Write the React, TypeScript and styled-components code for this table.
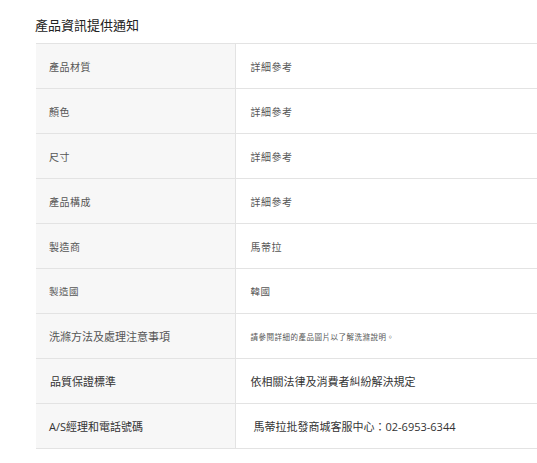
import React from 'react';
import styled, { createGlobalStyle } from 'styled-components';

const GlobalStyle = createGlobalStyle`
  html, body {
    margin: 0;
    padding: 0;
    background: #fff;
  }
  body {
    font-family: "Open Sans", "Noto Sans CJK TC", sans-serif;
    color: #333;
  }
`;

const Section = styled.section`
  padding: 16px 0 0 36px;
`;

const Title = styled.h3`
  margin: 0 0 9px -1px;
  font-size: 13px;
  line-height: 18px;
  font-weight: 400;
  color: #222;
`;

const Table = styled.table`
  width: 100%;
  border-collapse: collapse;
  border-top: 1px solid #e3e3e3;
`;

const Row = styled.tr`
  height: 45px;
  border-bottom: 1px solid #e3e3e3;
`;

type CellProps = { $size: number; $dark?: boolean; $indent?: number; $spacing?: number };

const Label = styled.th<CellProps>`
  width: 199px;
  box-sizing: border-box;
  padding: 0 0 0 ${(p) => p.$indent ?? 13}px;
  background: #f7f7f7;
  border-right: 1px solid #e3e3e3;
  text-align: left;
  font-weight: 400;
  font-size: ${(p) => p.$size}px;
  letter-spacing: ${(p) => p.$spacing ?? 0.5}px;
  color: ${(p) => (p.$dark ? '#333' : '#555')};
`;

const Value = styled.td<CellProps>`
  padding: 0 0 0 ${(p) => p.$indent ?? 15}px;
  font-size: ${(p) => p.$size}px;
  letter-spacing: ${(p) => p.$spacing ?? 0.5}px;
  color: ${(p) => (p.$dark ? '#333' : '#555')};
`;

const rows = [
  { label: '產品材質', value: '詳細參考', ls: 10, vs: 10 },
  { label: '顏色', value: '詳細參考', ls: 10, vs: 10 },
  { label: '尺寸', value: '詳細參考', ls: 10, vs: 10 },
  { label: '產品構成', value: '詳細參考', ls: 10, vs: 10 },
  { label: '製造商', value: '馬蒂拉', ls: 10, vs: 10 },
  { label: '製造國', value: '韓國', ls: 9.5, vs: 9.5 },
  { label: '洗滌方法及處理注意事項', value: '請參閱詳細的產品圖片以了解洗滌說明。', ls: 11, vs: 7.5, sp: 0 },
  { label: '品質保證標準', value: '依相關法律及消費者糾紛解決規定', ls: 11, vs: 11, dark: true, li: 14, sp: 0 },
  { label: 'A/S經理和電話號碼', value: '馬蒂拉批發商城客服中心：02-6953-6344', ls: 11, vs: 11, dark: true, vi: 18, sp: 0 },
];

export default function App() {
  return (
    <>
      <GlobalStyle />
      <Section>
        <Title>產品資訊提供通知</Title>
        <Table>
          <tbody>
            {rows.map((r) => (
              <Row key={r.label}>
                <Label $size={r.ls} $dark={r.dark} $indent={r.li} $spacing={r.sp}>
                  {r.label}
                </Label>
                <Value
                  $size={r.vs}
                  $dark={r.dark}
                  $indent={r.vi}
                  $spacing={r.sp === 0 && r.vs < 8 ? 0.5 : r.sp}
                >
                  {r.value}
                </Value>
              </Row>
            ))}
          </tbody>
        </Table>
      </Section>
    </>
  );
}
